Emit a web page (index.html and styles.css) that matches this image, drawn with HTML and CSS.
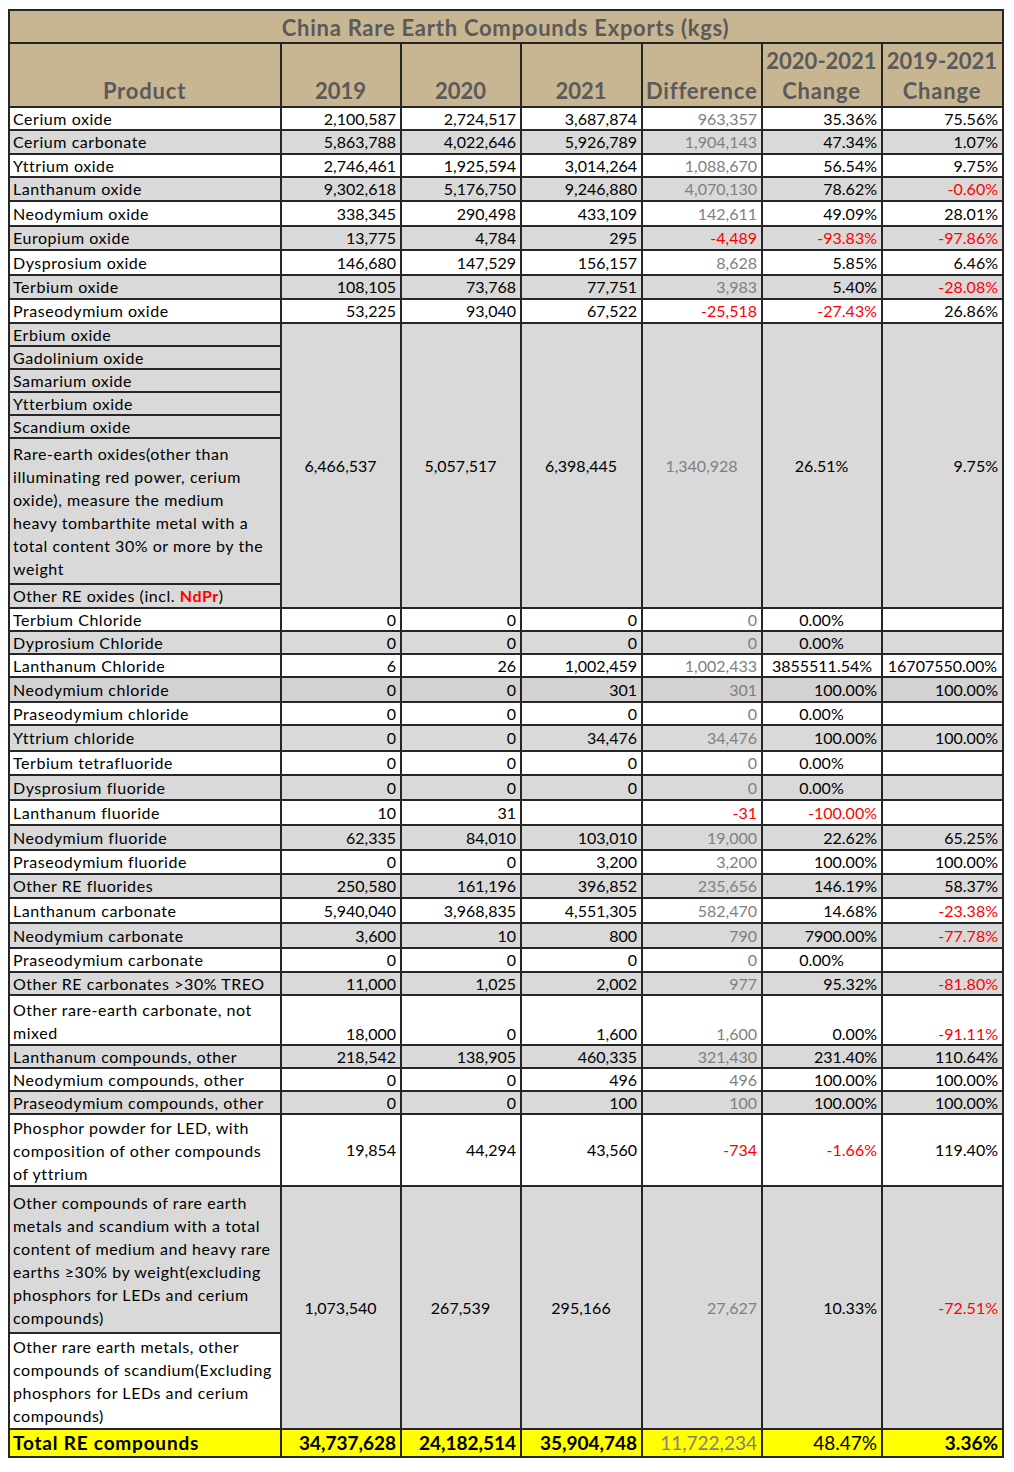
FILE: index.html
```html
<!DOCTYPE html>
<html lang="en">
<head>
<meta charset="utf-8">
<title>China Rare Earth Compounds Exports (kgs)</title>
<link rel="stylesheet" href="styles.css">
</head>
<body>
<div class="page">
<table class="sheet">
  <colgroup>
    <col class="c-prod"><col class="c-num"><col class="c-num"><col class="c-num2"><col class="c-num"><col class="c-num"><col class="c-num2">
  </colgroup>
  <thead>
    <tr class="h-title"><th colspan="7" class="title">China Rare Earth Compounds Exports (kgs)</th></tr>
    <tr class="h-head">
      <th class="wd">Product</th><th>2019</th><th>2020</th><th>2021</th><th class="wd">Difference</th><th>2020-2021<br><span class="wd">Change</span></th><th>2019-2021<br><span class="wd">Change</span></th>
    </tr>
  </thead>
  <tbody>
    <tr class="w h23"><td class="p">Cerium oxide</td><td>2,100,587</td><td>2,724,517</td><td>3,687,874</td><td class="d">963,357</td><td>35.36%</td><td>75.56%</td></tr>
    <tr class="g h24"><td class="p">Cerium carbonate</td><td>5,863,788</td><td>4,022,646</td><td>5,926,789</td><td class="d">1,904,143</td><td>47.34%</td><td>1.07%</td></tr>
    <tr class="w h23"><td class="p">Yttrium oxide</td><td>2,746,461</td><td>1,925,594</td><td>3,014,264</td><td class="d">1,088,670</td><td>56.54%</td><td>9.75%</td></tr>
    <tr class="g h24"><td class="p">Lanthanum oxide</td><td>9,302,618</td><td>5,176,750</td><td>9,246,880</td><td class="d">4,070,130</td><td>78.62%</td><td class="neg">-0.60%</td></tr>
    <tr class="w h25"><td class="p">Neodymium oxide</td><td>338,345</td><td>290,498</td><td>433,109</td><td class="d">142,611</td><td>49.09%</td><td>28.01%</td></tr>
    <tr class="g h24"><td class="p">Europium oxide</td><td>13,775</td><td>4,784</td><td>295</td><td class="neg">-4,489</td><td class="neg">-93.83%</td><td class="neg">-97.86%</td></tr>
    <tr class="w h25"><td class="p">Dysprosium oxide</td><td>146,680</td><td>147,529</td><td>156,157</td><td class="d">8,628</td><td>5.85%</td><td>6.46%</td></tr>
    <tr class="g h24"><td class="p">Terbium oxide</td><td>108,105</td><td>73,768</td><td>77,751</td><td class="d">3,983</td><td>5.40%</td><td class="neg">-28.08%</td></tr>
    <tr class="w h24"><td class="p">Praseodymium oxide</td><td>53,225</td><td>93,040</td><td>67,522</td><td class="neg">-25,518</td><td class="neg">-27.43%</td><td>26.86%</td></tr>
    <tr class="g h23"><td class="p">Erbium oxide</td>
      <td rowspan="7" class="ctr">6,466,537</td><td rowspan="7" class="ctr">5,057,517</td><td rowspan="7" class="ctr">6,398,445</td><td rowspan="7" class="ctr d">1,340,928</td><td rowspan="7" class="ctr">26.51%</td><td rowspan="7">9.75%</td></tr>
    <tr class="g h23"><td class="p">Gadolinium oxide</td></tr>
    <tr class="g h23"><td class="p">Samarium oxide</td></tr>
    <tr class="g h23"><td class="p">Ytterbium oxide</td></tr>
    <tr class="g h23"><td class="p">Scandium oxide</td></tr>
    <tr class="g h146"><td class="p multi">Rare-earth oxides(other than<br>illuminating red power, cerium<br>oxide), measure the medium<br>heavy tombarthite metal with a<br>total content 30% or more by the<br>weight</td></tr>
    <tr class="g h24"><td class="p">Other RE oxides (incl. <b class="red">NdPr</b>)</td></tr>
    <tr class="w h23"><td class="p">Terbium Chloride</td><td>0</td><td>0</td><td>0</td><td class="d">0</td><td class="ctr">0.00%</td><td></td></tr>
    <tr class="g h23"><td class="p">Dyprosium Chloride</td><td>0</td><td>0</td><td>0</td><td class="d">0</td><td class="ctr">0.00%</td><td></td></tr>
    <tr class="w h23"><td class="p">Lanthanum Chloride</td><td>6</td><td>26</td><td>1,002,459</td><td class="d">1,002,433</td><td class="ctr tight">3855511.54%</td><td class="ctr tight">16707550.00%</td></tr>
    <tr class="g2 h25"><td class="p">Neodymium chloride</td><td>0</td><td>0</td><td>301</td><td class="d">301</td><td>100.00%</td><td>100.00%</td></tr>
    <tr class="w h23"><td class="p">Praseodymium chloride</td><td>0</td><td>0</td><td>0</td><td class="d">0</td><td class="ctr">0.00%</td><td></td></tr>
    <tr class="g h26"><td class="p">Yttrium chloride</td><td>0</td><td>0</td><td>34,476</td><td class="d">34,476</td><td>100.00%</td><td>100.00%</td></tr>
    <tr class="w h24"><td class="p">Terbium tetrafluoride</td><td>0</td><td>0</td><td>0</td><td class="d">0</td><td class="ctr">0.00%</td><td></td></tr>
    <tr class="g h25"><td class="p">Dysprosium fluoride</td><td>0</td><td>0</td><td>0</td><td class="d">0</td><td class="ctr">0.00%</td><td></td></tr>
    <tr class="w h25"><td class="p">Lanthanum fluoride</td><td>10</td><td>31</td><td></td><td class="neg">-31</td><td class="neg">-100.00%</td><td></td></tr>
    <tr class="g h25"><td class="p">Neodymium fluoride</td><td>62,335</td><td>84,010</td><td>103,010</td><td class="d">19,000</td><td>22.62%</td><td>65.25%</td></tr>
    <tr class="w h24"><td class="p">Praseodymium fluoride</td><td>0</td><td>0</td><td>3,200</td><td class="d">3,200</td><td>100.00%</td><td>100.00%</td></tr>
    <tr class="g h24"><td class="p">Other RE fluorides</td><td>250,580</td><td>161,196</td><td>396,852</td><td class="d">235,656</td><td>146.19%</td><td>58.37%</td></tr>
    <tr class="w h25"><td class="p">Lanthanum carbonate</td><td>5,940,040</td><td>3,968,835</td><td>4,551,305</td><td class="d">582,470</td><td>14.68%</td><td class="neg">-23.38%</td></tr>
    <tr class="g h25"><td class="p">Neodymium carbonate</td><td>3,600</td><td>10</td><td>800</td><td class="d">790</td><td>7900.00%</td><td class="neg">-77.78%</td></tr>
    <tr class="w h24"><td class="p">Praseodymium carbonate</td><td>0</td><td>0</td><td>0</td><td class="d">0</td><td class="ctr">0.00%</td><td></td></tr>
    <tr class="g h23"><td class="p">Other RE carbonates &gt;30% TREO</td><td>11,000</td><td>1,025</td><td>2,002</td><td class="d">977</td><td>95.32%</td><td class="neg">-81.80%</td></tr>
    <tr class="w h50 btm"><td class="p multi">Other rare-earth carbonate, not<br>mixed</td><td>18,000</td><td>0</td><td>1,600</td><td class="d">1,600</td><td>0.00%</td><td class="neg">-91.11%</td></tr>
    <tr class="g h23"><td class="p">Lanthanum compounds, other</td><td>218,542</td><td>138,905</td><td>460,335</td><td class="d">321,430</td><td>231.40%</td><td>110.64%</td></tr>
    <tr class="w h23"><td class="p">Neodymium compounds, other</td><td>0</td><td>0</td><td>496</td><td class="d">496</td><td>100.00%</td><td>100.00%</td></tr>
    <tr class="g h23"><td class="p">Praseodymium compounds, other</td><td>0</td><td>0</td><td>100</td><td class="d">100</td><td>100.00%</td><td>100.00%</td></tr>
    <tr class="w h72"><td class="p multi">Phosphor powder for LED, with<br>composition of other compounds<br>of yttrium</td><td>19,854</td><td>44,294</td><td>43,560</td><td class="neg">-734</td><td class="neg">-1.66%</td><td>119.40%</td></tr>
    <tr class="g h147"><td class="p multi">Other compounds of rare earth<br>metals and scandium with a total<br>content of medium and heavy rare<br>earths ≥30% by weight(excluding<br>phosphors for LEDs and cerium<br>compounds)</td>
      <td rowspan="2" class="ctr">1,073,540</td><td rowspan="2" class="ctr">267,539</td><td rowspan="2" class="ctr">295,166</td><td rowspan="2" class="d">27,627</td><td rowspan="2">10.33%</td><td rowspan="2" class="neg">-72.51%</td></tr>
    <tr class="w h96"><td class="p multi">Other rare earth metals, other<br>compounds of scandium(Excluding<br>phosphors for LEDs and cerium<br>compounds)</td></tr>
    <tr class="total h28"><td class="p">Total RE compounds</td><td>34,737,628</td><td>24,182,514</td><td>35,904,748</td><td class="d reg">11,722,234</td><td class="reg">48.47%</td><td>3.36%</td></tr>
  </tbody>
</table>
</div>
</body>
</html>
```

FILE: styles.css
```css
html, body {
  margin: 0;
  padding: 0;
  background: #ffffff;
}

.page {
  padding: 9px 0 0 8px;
}

.sheet {
  border-collapse: collapse;
  table-layout: fixed;
  width: 994px;
  font-family: Lato, "Open Sans", "Liberation Sans", sans-serif;
  font-size: 16px;
  color: #000;
  border: 2px solid #262626;
}

.c-prod { width: 272px; }
.c-num { width: 120px; }
.c-num2 { width: 121px; }

.sheet th,
.sheet td {
  border: 2px solid #262626;
  padding: 0 4px 0 3px;
  line-height: 20px;
  white-space: nowrap;
  overflow: visible;
}

.sheet th {
  background: #c8b592;
  color: #5a5a5a;
  font-weight: 700;
  font-size: 22px;
  text-align: center;
  vertical-align: bottom;
  line-height: 30px;
}

.sheet th.wd,
.sheet th .wd {
  letter-spacing: 0.8px;
}

.h-title { height: 33px; }
.h-title .title {
  line-height: 29px;
  vertical-align: middle;
  letter-spacing: 0.75px;
  padding-top: 2px;
}
.h-head { height: 64px; }

.sheet td {
  text-align: right;
  vertical-align: middle;
}

.sheet td.p {
  text-align: left;
  letter-spacing: 0.55px;
}

.sheet td.multi {
  white-space: normal;
  line-height: 23px;
  padding-right: 2px;
}

.btm td { vertical-align: bottom; }
.sheet td.ctr { text-align: center; }
.sheet td.tight { padding-left: 0; padding-right: 0; }

.w td { background: #ffffff; }
.g td { background: #d9d9d9; }
.g2 td { background: #d3d1d1; }

.d { color: #808080; }
.neg { color: #ff0000; }
.red { color: #ff0000; font-weight: 700; }

.h23 { height: 23px; }
.h24 { height: 24px; }
.h25 { height: 25px; }
.h26 { height: 26px; }
.h28 { height: 28px; }
.h50 { height: 50px; }
.h72 { height: 72px; }
.h96 { height: 96px; }
.h146 { height: 146px; }
.h147 { height: 147px; }

.total td {
  background: #ffff00;
  font-weight: 700;
  font-size: 19px;
  line-height: 24px;
}

.sheet .total td.p { letter-spacing: 0.8px; }
.total td.reg { font-weight: 400; }
```
